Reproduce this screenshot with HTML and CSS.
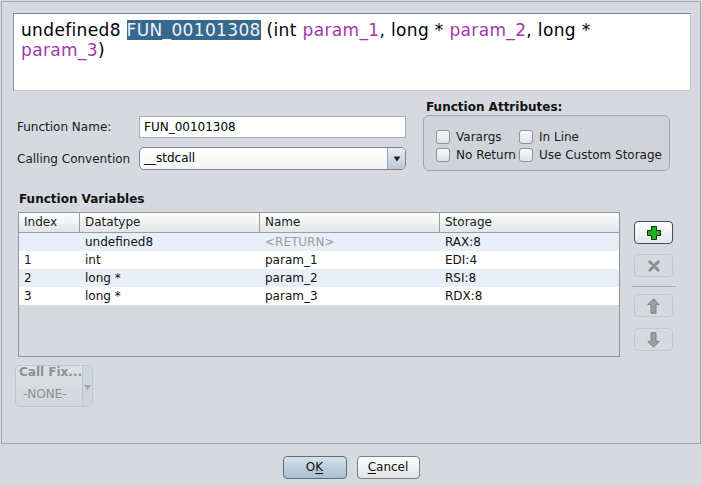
FILE: index.html
```html
<!DOCTYPE html>
<html>
<head>
<meta charset="utf-8">
<link rel="stylesheet" href="styles.css">
</head>
<body>
<div class="main">
  <div class="sig">undefined8 <span class="hl">FUN_00101308</span> (int <span class="p">param_1</span>, long * <span class="p">param_2</span>, long *<br><span class="p">param_3</span>)</div>

  <div class="mid">
    <div class="form">
      <div class="frow">
        <span class="lbl">Function Name:</span>
        <div class="input">FUN_00101308</div>
      </div>
      <div class="frow r2">
        <span class="lbl">Calling Convention</span>
        <div class="combo">
          <span class="cval">__stdcall</span>
          <span class="carrow"><svg width="8" height="6" viewBox="0 0 8 6"><path d="M0.5 0.5h7L4 5.5z" fill="#1e2228"/></svg></span>
        </div>
      </div>
    </div>
    <div class="attrs">
      <div class="ah">Function Attributes:</div>
      <div class="abox">
        <label class="cb"><span class="box"></span>Varargs</label>
        <label class="cb"><span class="box"></span>In Line</label>
        <label class="cb"><span class="box"></span>No Return</label>
        <label class="cb"><span class="box"></span>Use Custom Storage</label>
      </div>
    </div>
  </div>

  <div class="vh">Function Variables</div>

  <div class="vars">
    <div class="table">
      <div class="thead">
        <div class="th">Index</div>
        <div class="th">Datatype</div>
        <div class="th">Name</div>
        <div class="th last">Storage</div>
      </div>
      <div class="tr alt">
        <div class="td"></div>
        <div class="td">undefined8</div>
        <div class="td ret">&lt;RETURN&gt;</div>
        <div class="td">RAX:8</div>
      </div>
      <div class="tr">
        <div class="td">1</div>
        <div class="td">int</div>
        <div class="td">param_1</div>
        <div class="td">EDI:4</div>
      </div>
      <div class="tr alt">
        <div class="td">2</div>
        <div class="td">long *</div>
        <div class="td">param_2</div>
        <div class="td">RSI:8</div>
      </div>
      <div class="tr">
        <div class="td">3</div>
        <div class="td">long *</div>
        <div class="td">param_3</div>
        <div class="td">RDX:8</div>
      </div>
    </div>
    <div class="btns">
      <div class="ibtn add">
        <svg width="14" height="14" viewBox="0 0 14 14"><path d="M4.5 0.5h5v4h4v5h-4v4h-5v-4h-4v-5h4z" fill="#1fae1f" stroke="#0b330b" stroke-width="1"/></svg>
      </div>
      <div class="ibtn dis del">
        <svg width="12" height="12" viewBox="0 0 12 12"><path d="M2 2L10 10M10 2L2 10" stroke="#8c8e92" stroke-width="3" stroke-linecap="square"/></svg>
      </div>
      <div class="sep"></div>
      <div class="ibtn dis up">
        <svg width="13" height="16" viewBox="0 0 13 16"><path d="M6.5 0.8L12.2 6.5H9V15.2H4V6.5H0.8z" fill="#9c9ea2" stroke="#7e8085" stroke-width="1"/></svg>
      </div>
      <div class="ibtn dis down">
        <svg width="13" height="16" viewBox="0 0 13 16"><path d="M6.5 15.2L12.2 9.5H9V0.8H4V9.5H0.8z" fill="#9c9ea2" stroke="#7e8085" stroke-width="1"/></svg>
      </div>
    </div>
  </div>

  <div class="callfix">
    <div class="cfmain">
      <div class="cft">Call Fix...</div>
      <div class="cfv">-NONE-</div>
    </div>
    <div class="cfarrow"><svg width="7" height="5" viewBox="0 0 7 5"><path d="M0 0h7L3.5 5z" fill="#a3a7ad"/></svg></div>
  </div>
</div>

<div class="footer">
  <div class="btn ok">O<u>K</u></div>
  <div class="btn cancel"><u>C</u>ancel</div>
</div>
</body>
</html>
```

FILE: styles.css
```css
* { box-sizing: border-box; }
html, body {
  margin: 0;
  padding: 0;
  background: #d6d9df;
  font-family: "DejaVu Sans", sans-serif;
  font-size: 12px;
  color: #000;
}
.main {
  margin: 1px 1px 0 1px;
  width: 700px;
  height: 443px;
  border: 1px solid #a3a6ad;
  display: flex;
  flex-direction: column;
}
.sig {
  margin: 11px 0 0 11px;
  width: 678px;
  height: 78px;
  background: #fff;
  border-top: 1px solid #7d8188;
  border-left: 1px solid #8a8e95;
  border-right: 1px solid #c4c7cc;
  border-bottom: 1px solid #c4c7cc;
  padding: 6px 7px 0 7px;
  font-size: 17px;
  line-height: 20px;
  letter-spacing: 0.35px;
  color: #000;
}
.hl {
  background: #37688d;
  color: #eef2f6;
}
.p { color: #a238a8; }

.mid {
  display: flex;
  margin-top: 9px;
  padding-left: 15px;
}
.form {
  width: 389px;
  padding-top: 16px;
}
.frow {
  display: flex;
  align-items: center;
  height: 22px;
}
.frow.r2 {
  margin-top: 9px;
  height: 23px;
}
.lbl {
  width: 122px;
  color: #1a1a1a;
}
.input {
  width: 267px;
  height: 22px;
  background: #fff;
  border: 1px solid #a8acb3;
  padding-left: 4px;
  line-height: 21px;
  color: #000;
}
.combo {
  width: 267px;
  height: 23px;
  border: 1px solid #7f848c;
  border-radius: 5px;
  display: flex;
  overflow: hidden;
  background: linear-gradient(#ffffff, #f3f4f6);
}
.cval {
  flex: 1;
  padding-left: 4px;
  line-height: 21px;
}
.carrow {
  width: 18px;
  border-left: 1px solid #9ba3ad;
  background: linear-gradient(#e8eef4, #b9c8d7);
  display: flex;
  align-items: center;
  justify-content: center;
}
.attrs {
  margin-left: 17px;
  width: 247px;
}
.ah {
  font-weight: bold;
  line-height: 15px;
  padding-left: 3px;
  color: #111;
}
.abox {
  height: 56px;
  border: 1px solid #a3a6ac;
  border-radius: 6px;
  background: #d0d3d9;
  padding: 12px 0 0 12px;
  display: grid;
  grid-template-columns: 83px auto;
  grid-auto-rows: 18px;
}
.cb {
  display: flex;
  align-items: center;
  color: #1a1a1a;
  white-space: nowrap;
}
.box {
  width: 14px;
  height: 14px;
  border: 1px solid #8e939a;
  border-radius: 3px;
  background: linear-gradient(#fbfbfc, #dde1e6);
  margin-right: 6px;
  flex: none;
}

.vh {
  margin-top: 21px;
  padding-left: 17px;
  font-weight: bold;
  line-height: 15px;
  color: #111;
}
.vars {
  display: flex;
  margin-top: 5px;
  padding-left: 16px;
}
.table {
  width: 602px;
  height: 145px;
  border: 1px solid #8f939b;
}
.thead, .tr {
  display: grid;
  grid-template-columns: 61px 180px 180px 1fr;
}
.thead {
  height: 20px;
  border-bottom: 1px solid #9a9ea6;
  background: linear-gradient(#ffffff, #e2e4e8);
}
.th {
  border-right: 1px solid #9a9ea6;
  padding-left: 5px;
  line-height: 19px;
  color: #1a1a1a;
}
.th.last { border-right: none; }
.tr {
  height: 18px;
  background: #fff;
}
.tr.alt { background: #e9eff8; }
.td {
  padding-left: 5px;
  line-height: 18px;
  color: #111;
}
.td.ret { color: #9a9ca0; }

.btns {
  margin-left: 14px;
  padding-top: 9px;
  display: flex;
  flex-direction: column;
}
.ibtn {
  width: 39px;
  height: 23px;
  border-radius: 4px;
  display: flex;
  align-items: center;
  justify-content: center;
}
.ibtn.add {
  border: 1px solid #4a4e55;
  background: linear-gradient(#ffffff, #e4e6ea);
}
.ibtn.dis {
  border: 1px solid #c3c6cc;
  background: #d6d9df;
}
.ibtn.del { margin-top: 10px; }
.sep {
  margin: 9px 0 0 -2px;
  width: 44px;
  height: 1px;
  background: #a8abb1;
}
.ibtn.up { margin-top: 7px; }
.ibtn.down { margin-top: 11px; }

.callfix {
  margin: 8px 0 0 13px;
  width: 78px;
  height: 42px;
  border: 1px solid #c2c5cb;
  border-radius: 5px;
  background: linear-gradient(#dfe1e5, #d2d5db);
  display: flex;
  overflow: hidden;
}
.cfmain {
  flex: 1;
}
.cft {
  font-weight: bold;
  color: #8d9095;
  padding-left: 3px;
  line-height: 13px;
  white-space: nowrap;
}
.cfv {
  color: #8a8d92;
  padding-left: 7px;
  margin-top: 8px;
  line-height: 14px;
}
.cfarrow {
  width: 16px;
  border-left: 1px solid #c2c7cf;
  background: #cfd5de;
  display: flex;
  align-items: center;
  justify-content: center;
  padding-top: 2px;
}

.footer {
  display: flex;
  justify-content: center;
  gap: 10px;
  padding-top: 12px;
}
.btn {
  height: 23px;
  border-radius: 4px;
  text-align: center;
  line-height: 21px;
  color: #111;
}
.btn u { text-decoration: underline; text-underline-offset: 2px; }
.btn.ok {
  width: 64px;
  border: 1px solid #5f6e7e;
  background: linear-gradient(#d6e1ec, #a9bdd1);
}
.btn.cancel {
  width: 63px;
  border: 1px solid #7c8087;
  background: linear-gradient(#ffffff, #dfe2e6);
}
```
